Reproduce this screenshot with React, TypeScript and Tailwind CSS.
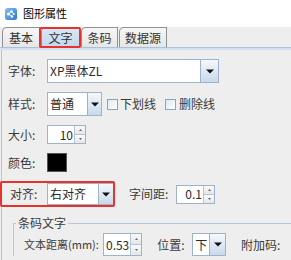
import React from 'react';

const font = { fontFamily: '"Noto Sans CJK SC", "Noto Sans", sans-serif' };

const Arrow = () => (
  <svg width="8" height="5" viewBox="0 0 8 5">
    <path d="M0 0.5 H8 L4 4.5 Z" fill="#111" />
  </svg>
);

const Combo = ({ text, width, btn }: { text: string; width: number; btn: number }) => (
  <div className="flex h-full border border-[#9fb3c8] bg-white" style={{ width }}>
    <div className="flex-1 flex items-center pl-[2px] text-[12px] text-[#2a2a2a] leading-none overflow-hidden whitespace-nowrap">
      {text}
    </div>
    <div
      className="flex items-center justify-center border-l border-[#9fb3c8] bg-gradient-to-b from-[#f4f8fc] to-[#c8d9eb]"
      style={{ width: btn }}
    >
      <Arrow />
    </div>
  </div>
);

const Spinner = ({ value, width }: { value: string; width: number }) => (
  <div className="flex h-full border border-[#9fb3c8] bg-white" style={{ width }}>
    <div className="flex-1 flex items-center justify-end pr-[1px] text-[12px] text-[#2a2a2a] leading-none">
      {value}
    </div>
    <div className="w-[11px] flex flex-col border-l border-[#b4c4d4]">
      <div className="flex-1 flex items-center justify-center border-b border-[#b4c4d4] bg-gradient-to-b from-[#fafafa] to-[#e6e6e6]">
        <svg width="3" height="2" viewBox="0 0 3 2"><path d="M0 2 L1.5 0 L3 2 Z" fill="#666" /></svg>
      </div>
      <div className="flex-1 flex items-center justify-center bg-gradient-to-b from-[#fafafa] to-[#e6e6e6]">
        <svg width="3" height="2" viewBox="0 0 3 2"><path d="M0 0 L1.5 2 L3 0 Z" fill="#666" /></svg>
      </div>
    </div>
  </div>
);

const Check = () => (
  <div className="w-[11px] h-[11px] border border-[#8ea2b8] bg-gradient-to-br from-[#dfe8f2] to-[#ffffff]" />
);

const Label = ({ children, w, small }: { children: React.ReactNode; w: number; small?: boolean }) => (
  <div
    className={`${small ? 'text-[11px]' : 'text-[12px]'} text-[#3a3a3a] leading-none whitespace-nowrap`}
    style={{ width: w }}
  >
    {children}
  </div>
);

const Tab = ({ label, active, width }: { label: string; active?: boolean; width: number }) => (
  <div
    className={`h-[20px] flex items-center justify-center border-t border-l border-r border-[#8e9094] rounded-tl-[5px] text-[12px] text-[#333] leading-none ${
      active ? 'bg-gradient-to-b from-[#d9e7f5] to-[#c2d7ee]' : 'bg-gradient-to-b from-[#f7f7f7] to-[#e6e6e6]'
    }`}
    style={{ width }}
  >
    {label}
  </div>
);

export default function App() {
  return (
    <div className="relative w-[291px] h-[260px] bg-[#eeeeee] overflow-hidden" style={font}>
      <div className="h-[27px] bg-white flex items-center pl-[5px] gap-[6px]">
        <svg width="12" height="12" viewBox="0 0 12 12">
          <defs>
            <linearGradient id="ic" x1="0" y1="0" x2="1" y2="1">
              <stop offset="0" stopColor="#7fc0f5" />
              <stop offset="1" stopColor="#2b78d2" />
            </linearGradient>
          </defs>
          <rect x="0" y="0" width="12" height="12" rx="2.5" fill="url(#ic)" />
          <path d="M3.5 6 L6.5 3.5 M3.5 6 L7 8.5 M6.5 3.5 L8.5 6" stroke="#fff" strokeWidth="0.8" />
          <circle cx="3.5" cy="6" r="1.6" fill="#fff" />
          <circle cx="6.5" cy="3.5" r="1.3" fill="#fff" />
          <circle cx="7" cy="8.5" r="1.3" fill="#fff" />
          <circle cx="8.8" cy="6" r="1" fill="#fff" />
        </svg>
        <span className="text-[11px] text-black leading-none">图形属性</span>
      </div>

      <div className="h-[20px] flex items-end pl-[2px] gap-[1px]">
        <Tab label="基本" width={38} />
        <Tab label="文字" width={39} active />
        <Tab label="条码" width={37} />
        <Tab label="数据源" width={48} />
      </div>
      <div className="h-[3px] border-t border-[#a9c0d8] bg-[#d3e2f2]" />

      <div className="ml-[1px] border-l border-[#b4c6d8] h-[210px] flex flex-col">
        <div className="mt-[9px] h-[24px] flex items-center pl-[6px]">
          <Label w={39}>字体:</Label>
          <Combo text="XP黑体ZL" width={172} btn={18} />
        </div>

        <div className="mt-[9px] h-[24px] flex items-center pl-[6px]">
          <Label w={39}>样式:</Label>
          <Combo text="普通" width={55} btn={14} />
          <div className="ml-[5px] flex items-center gap-[2px]">
            <Check />
            <span className="text-[12px] text-[#3a3a3a] leading-none">下划线</span>
          </div>
          <div className="ml-[9px] flex items-center gap-[3px]">
            <Check />
            <span className="text-[12px] text-[#3a3a3a] leading-none">删除线</span>
          </div>
        </div>

        <div className="mt-[9px] h-[19px] flex items-center pl-[6px]">
          <Label w={39}>大小:</Label>
          <Spinner value="10" width={39} />
        </div>

        <div className="mt-[9px] h-[19px] flex items-center pl-[6px]">
          <Label w={39}>颜色:</Label>
          <div className="w-[20px] h-[19px] bg-black border border-[#555]" />
        </div>

        <div className="mt-[11px] h-[22px] flex items-center pl-[8px]">
          <Label w={37}>对齐:</Label>
          <Combo text="右对齐" width={67} btn={15} />
          <div className="ml-[15px]">
            <Label w={47}>字间距:</Label>
          </div>
          <div className="h-[19px]">
            <Spinner value="0.1" width={39} />
          </div>
        </div>

        <fieldset className="mt-[10px] ml-[11px] border-t border-l border-[#b8c8d8] min-w-0">
          <legend className="ml-[2px] px-[2px] text-[12px] text-[#3a3a3a] leading-[16px]">条码文字</legend>
          <div className="mt-[2px] h-[23px] flex items-center pl-[10px]">
            <Label w={82} small>文本距离(mm):</Label>
            <Spinner value="0.53" width={41} />
            <div className="ml-[15px]">
              <Label w={35}>位置:</Label>
            </div>
            <Combo text="下" width={35} btn={16} />
            <div className="ml-[15px]">
              <Label w={50}>附加码:</Label>
            </div>
          </div>
        </fieldset>
      </div>

      <div className="absolute left-[39px] top-[27px] w-[42px] h-[21px] border-2 border-[#e8322c] rounded-[2px]" />
      <div className="absolute left-0 top-[181px] w-[115px] h-[26px] border-2 border-[#e8322c] rounded-[2px]" />
    </div>
  );
}
